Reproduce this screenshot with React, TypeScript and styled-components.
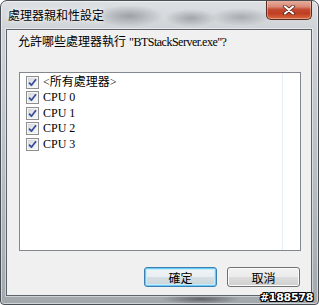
import React from 'react';
import styled, { createGlobalStyle } from 'styled-components';

const Global = createGlobalStyle`
  html, body { margin: 0; padding: 0; background: #ffffff; }
  #root { width: 319px; height: 305px; }
`;

const Window = styled.div`
  position: relative;
  box-sizing: border-box;
  width: 319px;
  height: 305px;
  border: 1px solid #4a4f55;
  border-radius: 7px 7px 4px 4px;
  padding: 0 6px 8px 5px;
  display: flex;
  flex-direction: column;
  overflow: hidden;
  background:
    radial-gradient(ellipse 34px 11px at 128px 15px, rgba(100, 106, 114, 0.5), transparent),
    radial-gradient(ellipse 26px 9px at 190px 17px, rgba(100, 106, 114, 0.45), transparent),
    radial-gradient(ellipse 30px 9px at 240px 16px, rgba(100, 106, 114, 0.4), transparent),
    radial-gradient(ellipse 40px 5px at 200px 298px, rgba(50, 54, 60, 0.6), transparent),
    linear-gradient(180deg, #dde0e3 0px, #cfd3d7 28px, #babfc4 55%, #a3a8ad 100%);
  box-shadow: inset 0 0 0 1px rgba(255, 255, 255, 0.5);
  font-family: "Liberation Serif", "Noto Sans CJK TC", serif;
`;

const TitleBar = styled.div`
  height: 28px;
  display: flex;
  align-items: flex-start;
  justify-content: space-between;
`;

const Title = styled.span`
  padding-left: 2px;
  line-height: 28px;
  font-family: "Noto Sans CJK TC", sans-serif;
  font-size: 12px;
  color: #000;
  text-shadow: 0 0 6px rgba(255, 255, 255, 0.9), 0 0 3px rgba(255, 255, 255, 0.9);
`;

const CloseButton = styled.div`
  box-sizing: border-box;
  width: 46px;
  height: 20px;
  margin-top: -1px;
  border: 1px solid #5b2a20;
  border-top: none;
  border-radius: 0 0 5px 5px;
  display: flex;
  align-items: center;
  justify-content: center;
  background: linear-gradient(
    180deg,
    #eab2a4 0%,
    #d98a77 35%,
    #c44b31 50%,
    #bf3d22 70%,
    #d8693f 100%
  );
  box-shadow: inset 0 0 0 1px rgba(255, 220, 200, 0.45);
`;

const Client = styled.div`
  flex: 1;
  display: flex;
  flex-direction: column;
  border: 1px solid #5d636a;
  background: #f0f0f0;
  padding: 4px 10px 0 11px;
  box-shadow: 0 0 0 1px rgba(255, 255, 255, 0.45);
`;

const Prompt = styled.div`
  height: 16px;
  line-height: 16px;
  font-size: 12px;
  color: #000;
  white-space: nowrap;
`;

const Latin = styled.span`
  letter-spacing: -0.5px;
`;

const ListBox = styled.div`
  box-sizing: border-box;
  height: 179px;
  margin: 22px 0 0 1px;
  border: 1px solid #828790;
  background: #ffffff;
  display: flex;
`;

const Column = styled.div`
  width: 262px;
  border-right: 1px solid #e6eef5;
  padding-top: 1.5px;
  display: flex;
  flex-direction: column;
`;

const Row = styled.div`
  height: 15.5px;
  display: flex;
  align-items: center;
  gap: 4px;
  padding-left: 6px;
  font-size: 12px;
  line-height: 15px;
  color: #000;
`;

const Box = styled.span`
  box-sizing: border-box;
  width: 13px;
  height: 13px;
  flex: none;
  border: 1px solid #8e8f8f;
  background: linear-gradient(135deg, #cfd3d8 0%, #eceef0 60%, #fafafa 100%);
  box-shadow: inset 0 0 0 1px #f6f6f6;
  display: flex;
  align-items: center;
  justify-content: center;
`;

const ButtonRow = styled.div`
  margin-top: 16px;
  padding-right: 1px;
  display: flex;
  justify-content: flex-end;
  gap: 10px;
`;

const Button = styled.div<{ $default?: boolean }>`
  box-sizing: border-box;
  width: 73px;
  height: 20px;
  border: 1px solid ${(p) => (p.$default ? '#3c7fb1' : '#707070')};
  border-radius: 3px;
  display: flex;
  align-items: center;
  justify-content: center;
  font-family: "Noto Sans CJK TC", sans-serif;
  font-size: 12px;
  color: #000;
  background: ${(p) =>
    p.$default
      ? 'linear-gradient(180deg, #f0f4f6 0%, #e8eef1 50%, #d7dfe3 50%, #c9d3d8 100%)'
      : 'linear-gradient(180deg, #f2f2f2 0%, #ebebeb 50%, #dddddd 50%, #cfcfcf 100%)'};
  box-shadow: ${(p) =>
    p.$default
      ? 'inset 0 0 0 1px #6ccbf2, inset 0 0 0 2px #c6ebfa'
      : 'inset 0 0 0 1px #fbfbfb'};
`;

const Watermark = styled.span`
  position: absolute;
  right: 5px;
  bottom: 1px;
  font-family: "DejaVu Sans", sans-serif;
  font-weight: bold;
  font-size: 11px;
  line-height: 11px;
  color: #ffffff;
  letter-spacing: -0.3px;
  text-shadow:
    1px 0 0 #000, -1px 0 0 #000, 0 1px 0 #000, 0 -1px 0 #000,
    1px 1px 0 #000, -1px -1px 0 #000, 1px -1px 0 #000, -1px 1px 0 #000;
`;

const Check = () => (
  <svg width="9" height="9" viewBox="0 0 9 9">
    <path
      d="M1 4.6 L3.4 7.2 L8 1.2"
      fill="none"
      stroke="#3a4d9a"
      strokeWidth="1.8"
      strokeLinejoin="round"
    />
  </svg>
);

const CloseX = () => (
  <svg width="12" height="10" viewBox="0 0 12 10">
    <path
      d="M2 1.5 L10 8.5 M10 1.5 L2 8.5"
      stroke="#4a1a12"
      strokeWidth="3.6"
      strokeLinecap="round"
    />
    <path
      d="M2 1.5 L10 8.5 M10 1.5 L2 8.5"
      stroke="#ffffff"
      strokeWidth="2.2"
      strokeLinecap="round"
    />
  </svg>
);

const items = ['<所有處理器>', 'CPU 0', 'CPU 1', 'CPU 2', 'CPU 3'];

export default function App() {
  return (
    <>
      <Global />
      <Window>
        <TitleBar>
          <Title>處理器親和性設定</Title>
          <CloseButton>
            <CloseX />
          </CloseButton>
        </TitleBar>
        <Client>
          <Prompt>
            允許哪些處理器執行 <Latin>"BTStackServer.exe"?</Latin>
          </Prompt>
          <ListBox>
            <Column>
              {items.map((it) => (
                <Row key={it}>
                  <Box>
                    <Check />
                  </Box>
                  <span>{it}</span>
                </Row>
              ))}
            </Column>
          </ListBox>
          <ButtonRow>
            <Button $default>確定</Button>
            <Button>取消</Button>
          </ButtonRow>
        </Client>
        <Watermark>#188578</Watermark>
      </Window>
    </>
  );
}
